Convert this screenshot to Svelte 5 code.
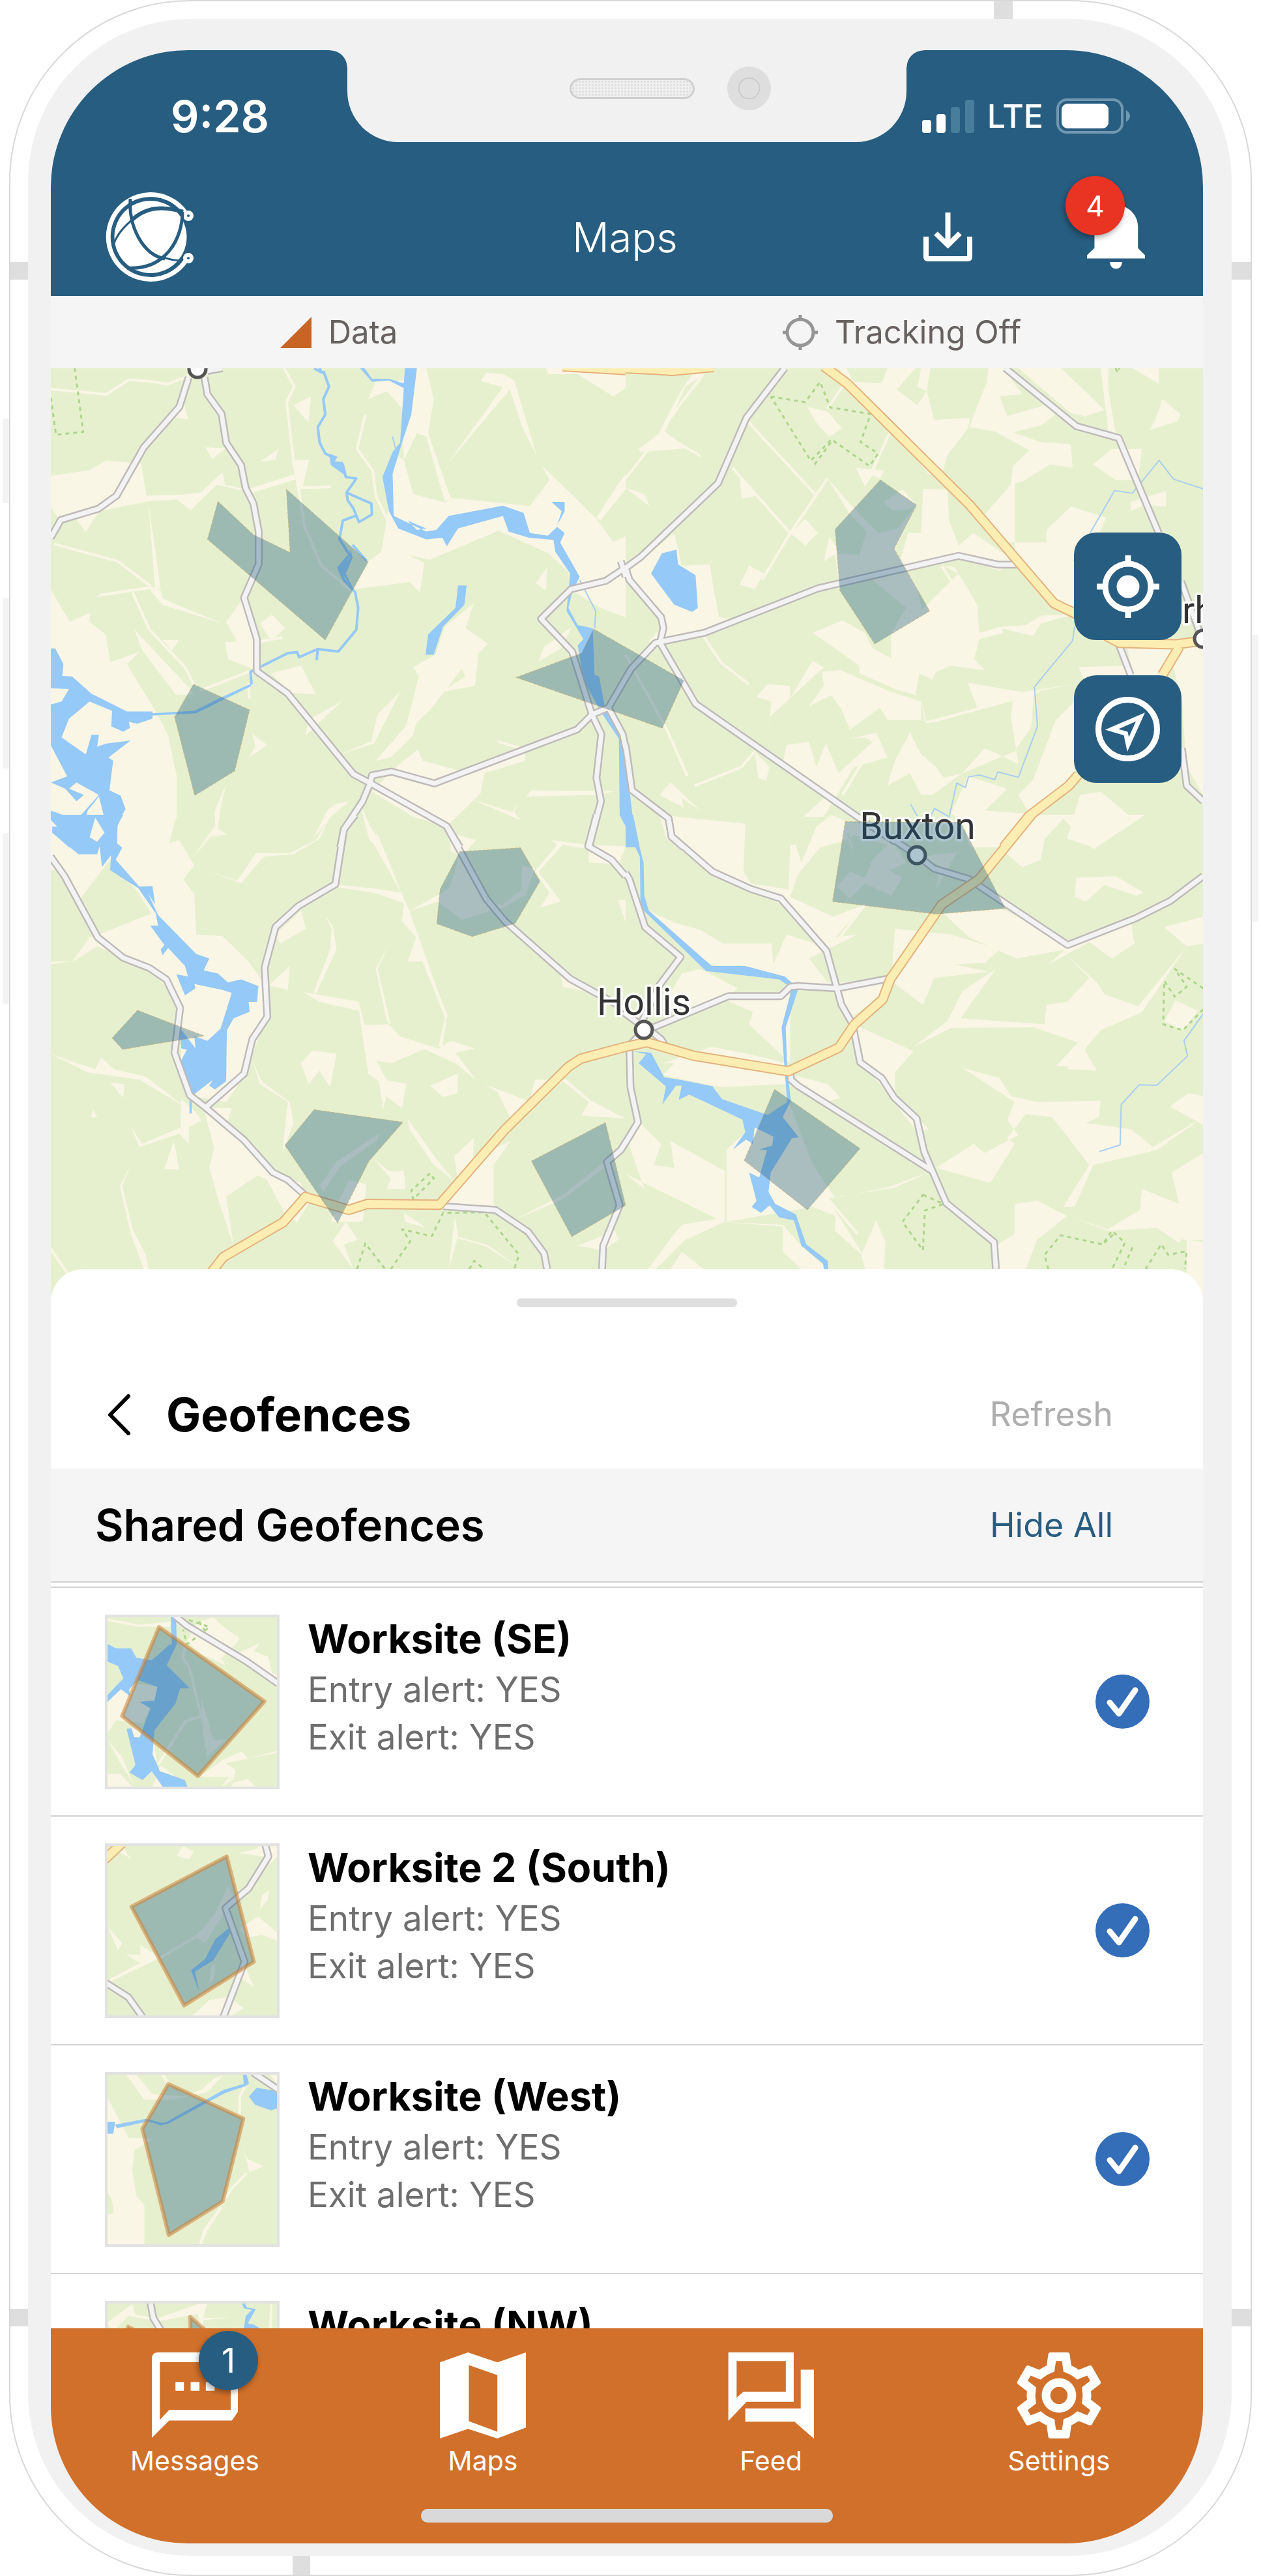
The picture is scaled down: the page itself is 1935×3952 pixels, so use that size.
<script>
  // The map is surveyed in four tiles; each tile has its own local units.
  const tiles = {
    nw: 'translate(60 550) scale(.574 .4783)',
    ne: 'translate(960 550) scale(.574 .4783)',
    sw: 'translate(60 1250) scale(.574 .4592)',
    se: 'translate(960 1250) scale(.574 .4592)'
  };

  const clearings = {
    nw: `M31,377 L135,358 180,327 273,337 287,440 380,437 432,430 490,365 497,405 545,417 562,418 680,372 685,388 570,430 475,405 405,487 368,452 292,458 160,490 125,558 90,500 50,510 31,475Z
      M31,740 L82,845 137,815 135,845 178,885 190,975 270,940 235,980 320,1150 345,1210 368,1340 368,1460 345,1568 31,1568Z
      M500,845 L545,770 590,900 580,1000 505,965 497,910 530,908Z M590,850 L622,822 658,865 620,905Z M445,285 L500,288 462,322Z M592,330 L640,290 632,325Z
      M680,150 L727,122 720,205Z M682,325 L722,325 705,410 690,415Z M385,130 L398,195 365,190Z M330,903 L373,903 355,937Z
      M255,870 L400,1055 415,1080 365,1078 275,935Z M162,755 L298,730 325,745 330,770 490,850 330,790 295,740 155,765Z M292,458 L325,740 310,740Z
      M620,1010 L700,985 740,1078 670,1072Z M930,510 L985,630 1030,655 1018,750 990,717 840,740 880,650 915,620Z
      M975,325 L1000,435 1087,463 1100,447 1312,473 1365,390 1345,345 1420,430 1490,515 1535,588 1568,570 1568,830 1500,800 1420,740 1420,690 1362,625 1228,552 1045,645 985,630 930,515 945,300Z
      M1180,72 L1195,45 1240,50 1270,70 1330,310 1295,230 1258,100 1090,340 1240,92Z M1355,31 L1568,31 1568,95 1535,122 1440,50 1360,50Z
      M1012,31 L1035,31 1055,130 1040,240 1100,447 1085,460 1035,250 1010,240 975,325 970,160 930,105 880,130 900,75 970,70Z
      M1162,785 L1140,865 1200,915 1175,945 1165,1050 1075,1070 1140,1020 1130,995 1050,1120 1008,1170 1000,1210 940,1280 900,1290 980,1180 990,1140 1015,1020 1000,990 1060,950 1085,860Z
      M1358,670 L1355,745 1328,720Z M1425,860 L1395,930 1335,972 1350,925Z M570,1205 L610,1240 560,1280 578,1245Z M808,1100 L712,1210 720,1160Z
      M965,1070 L895,1235 808,1268 888,1228 905,1140Z M945,1320 L1012,1255 1025,1290 1150,1330 1300,1255 1300,1290 1190,1330 1180,1395 1090,1500 1000,1470 890,1390Z
      M1160,1415 L1265,1455 1280,1425 1270,1455 1288,1482Z M1315,1385 L1540,1388 1490,1400 1303,1405Z M790,1430 L830,1420 780,1470 740,1530 705,1568 735,1535 770,1450Z
      M855,1420 L885,1500 920,1568 885,1550Z M500,1365 L485,1440 478,1508 502,1528 460,1530 410,1600 470,1500 470,1450Z M1550,400 L1568,370 1568,420 1500,520 1490,510Z`,
    ne: `M190,31 L235,31 160,90 105,235 165,288 40,300 35,290 92,238 105,200 150,100Z
      M570,31 L590,31 610,75 685,80 700,31 775,31 725,100 780,150 805,105 825,197 920,190 915,225 860,310 845,375 810,372 725,240 600,90Z
      M790,31 L815,31 805,105 780,90Z M970,31 L1010,31 1060,115 1000,120 1020,185 1120,150 1160,170 1110,215 1035,237 1110,268 1190,275 1195,350 1135,340 1060,395 1040,400 1040,590 1000,590 960,500 1030,405 1035,345 1080,295 990,235 920,220 940,150 965,80Z
      M1050,31 L1165,31 1280,165 1230,185 1190,175Z M1270,31 L1290,31 1290,100 1310,240 1290,230Z M1355,31 L1425,31 1425,80Z M1435,130 L1485,180 1475,200 1400,230 1415,200Z
      M1190,475 L1285,510 1235,640 1200,720 1230,800 1150,790 1040,650 1040,590 1125,590 1125,550Z M1250,340 L1300,290 1380,290 1370,390 1310,390Z M1350,490 L1350,460 1445,425 1445,475 1390,470Z
      M795,418 L860,420 865,520 890,600 930,560 1040,650 1000,680 895,640 730,665 755,560 790,560Z M540,385 L610,480 675,560 725,548 778,470 720,610 780,740 800,850 650,700 570,715 560,625 625,630 645,555 600,500Z M615,350 L690,360 680,385 660,375 640,410Z
      M690,460 L740,420 778,470 755,485 710,485Z M285,350 L350,440 310,450 305,380Z M480,515 L515,560 480,600 440,560Z M0,415 L50,435 65,475Z
      M130,560 L150,665 225,660 235,740 250,830 300,840 60,910 100,860 90,800 0,700 0,670 50,640Z M305,725 L330,665 370,690 345,740Z M545,570 L570,620 530,650Z M485,155 L540,170 578,225 545,250 515,215Z
      M750,800 L780,820 890,690 850,665 880,670 940,790 945,880 1005,860 1070,855 1110,825 1200,820 1110,850 1090,890 1005,865 1010,880 945,900 932,965 960,1000 870,985 830,1005 820,1030 785,1010 775,1080 720,1060 625,1010 625,985 560,930 500,880 580,840 640,880 660,930 710,960 710,880Z
      M525,1005 L575,1000 700,1065 790,1100 790,1160 700,1160 680,1120 600,1190 575,1120 550,1080 490,1115 530,1050Z M380,1045 L440,1050 440,1090 500,970 530,990 385,1150 380,1210 390,1100 350,1085Z
      M915,1040 L1060,1070 1195,1045 1110,1065 1095,1080 1030,1100 830,1165 805,1170 790,1095 800,1165 940,1120Z M1035,1100 L1090,1080 1085,1180 1040,1260 900,1330 960,1250 1050,1300 1030,1150Z
      M430,1240 L490,1230 510,1310 535,1235 570,1330 660,1230 640,1215 600,1220 670,1200 700,1280 610,1310 530,1470 475,1470 530,1410 420,1300Z
      M760,1200 L790,1270 830,1310 850,1345 900,1330 820,1400 790,1400 760,1330 700,1370 720,1290Z M915,1340 L1020,1380 960,1450 1075,1460 1040,1520 1000,1568 920,1568 900,1480 870,1460Z
      M1150,1160 L1200,1100 1200,1370 1080,1460 1050,1400 1090,1350Z M1210,990 L1330,985 1350,1015 1230,1040Z M1340,925 L1470,930 1430,1020 1360,1020Z M1455,940 L1544,920 1544,1400 1500,1310 1487,1100Z
      M1215,1400 L1270,1390 1360,1480 1250,1568 1180,1540Z M345,1260 L385,1310 375,1355 355,1345Z M120,1360 L200,1450 150,1410 155,1440 90,1400Z`,
    sw: `M31,0 L370,0 340,97 375,85 415,170 385,215 415,265 420,400 490,405 560,490 600,560 600,700 550,870 500,960 415,940 380,820 375,640 300,510 155,440 88,492 135,410 170,395 300,330 265,260 190,150 110,280 60,185 31,185Z
      M88,488 L31,500 31,492Z M412,145 L465,70 502,70 460,74Z M580,128 L670,128 740,85 780,0 750,80 680,132 600,140 540,228 430,180 530,220Z
      M850,0 L885,80 905,65 975,280 990,320 1090,675 1078,775 1068,775 1085,678 1025,490 985,490 1008,410 970,355 975,295 900,262 800,242 800,234 900,247 968,260Z
      M705,592 L855,625 870,702 935,700 965,740 1068,782 1100,755 1165,780 1112,795 1170,888 1115,832 1030,783 942,830 902,822 930,888 982,898 970,980 928,940 920,985 908,890 880,865 855,655 750,625Z
      M990,322 L1070,265 1098,245 1125,125 1200,300 1240,300 1290,250 1290,170 1325,180 1300,270 1240,310 1130,350 1065,290Z M1370,85 L1465,100 1568,105 1550,165 1470,160 1470,115 1400,100 1335,190 1395,290 1340,310 1365,260 1325,190 1385,100Z
      M1045,905 L1120,865 1118,930 1080,943Z M700,830 L730,788 795,798 778,910 750,855 720,900Z M1190,900 L1305,955 1260,1015 1225,925Z M615,570 L670,505 665,585Z M632,400 L700,320 713,380 645,430Z
      M1100,60 L1168,85 1130,140 1100,120Z M765,340 L785,370 795,450 740,598 733,595 778,450 782,380Z M935,430 L905,515 940,700 930,690 900,515Z
      M440,980 L515,980 500,1040 545,1090 580,1110 620,1200 700,1230 720,1300 690,1360 660,1340 610,1220 585,1205 500,1275 520,1440 480,1290 455,1180 468,1115Z
      M380,950 L415,990 435,1020 400,1045 400,1100 375,1065 268,1110 245,1040 275,1100 378,1045Z M360,1090 L375,1185 335,1183Z M190,895 L228,900 225,945Z M165,812 L200,850 285,875 400,985 270,885 130,860 31,800 150,850Z M145,985 L155,1012 138,1010Z
      M245,1170 L222,1240 250,1385 285,1470 292,1518 280,1518 245,1400 216,1240Z M570,820 L595,890 670,960 680,1030 650,1130 665,960 590,900Z
      M750,1240 L795,1160 908,1065 905,1085 805,1175 760,1260Z M800,1290 L830,1220 875,1235 865,1360 780,1360Z M820,1360 L852,1420 815,1435 840,1518 785,1425Z
      M895,1150 L935,1190 975,1190 980,1250 930,1250 940,1215Z M985,1015 L1065,1155 1112,1225 1055,1170 990,1050Z M1110,1140 L1162,1080 1160,1150 1260,1090 1215,1170 1215,1310 1080,1300 1120,1225Z
      M1325,885 L1410,885 1475,955 1568,1015 1450,1005 1470,960 1400,890 1310,960Z M1275,1350 L1400,1270 1510,1160 1515,1175 1400,1285Z M1440,1440 L1540,1390 1548,1420 1510,1455Z M975,1330 L1035,1380 978,1360Z
      M1112,1340 L1120,1410 1200,1438 1290,1518 1195,1442 1118,1415 1095,1518Z M1395,540 L1430,545 1500,600 1400,575Z M1548,285 L1568,285 1568,360Z`,
    se: `M90,0 L320,30 315,190 335,230 440,250 435,275 440,100 455,100 470,160 510,40 550,0 620,40 600,80 520,110 460,200 440,275 555,340 640,300 560,410 620,400 490,480 540,560 690,555 690,600 600,680 540,450 420,300 220,190 110,80Z
      M60,320 L130,360 200,385 260,430 390,430 395,500 430,400 530,440 550,570 440,570 410,540 230,500 130,420Z M150,530 L200,515 300,580 280,600 400,610 440,600 440,830 330,700 340,660 270,620 170,650 100,640Z
      M720,380 L870,400 1000,450 960,495 880,500 970,525 825,545 795,635 710,555Z M850,330 L1010,315 1180,430 1350,350 1360,430 1300,480 1240,425 1130,500 1175,450 1045,480 990,450 920,410Z
      M565,240 L600,190 640,210 660,150 700,100 590,60 610,130 590,25 650,30 720,100 750,160 705,185 740,210 710,270 640,230 600,280Z M790,140 L885,125 830,250 840,170Z
      M940,200 L1000,100 1060,20 1100,0 1180,0 1120,80 1110,150 1060,175 1010,120Z M1205,210 L1310,205 1385,260 1365,270 1280,235 1230,290 1200,275Z M1440,375 L1544,340 1544,430 1500,440Z M1160,0 L1200,0 1250,60 1350,0 1390,0 1250,115Z
      M900,590 L990,515 895,680 1120,700 1125,635 1180,625 1240,545 1175,465 1260,560 1280,600 1370,640 1500,440 1380,660 1270,720 1190,840 1150,840 1210,760 1090,710 870,712 770,775 860,690Z
      M1220,770 L1260,855 1180,850Z M900,845 L1000,880 1030,940 1100,960 1270,955 1265,1010 1230,1030 1350,1050 1410,1110 1544,1010 1420,1120 1250,1170 1200,1310 1170,1310 1240,1170 1140,1010 1070,1000 1020,1080 1040,1100 975,1230 830,1180 930,1100 960,1130 1050,1070 1020,1020 1040,960Z
      M610,700 L770,790 720,860 720,930 810,1050 780,1060 680,900 630,830Z M450,870 L540,900 575,945 540,960 480,930Z M100,830 L230,775 330,800 430,830 430,900 250,910 100,870 130,830Z
      M440,970 L500,1170 560,1280 700,1245 820,1190 720,1245 540,1282 640,1480 560,1390 560,1340 500,1310 400,1200 500,1160 500,1310 270,1360 270,1120 320,1060Z
      M0,1070 L40,1030 95,1100 75,1170 130,1180 120,1090 265,1190 265,1360 160,1420 80,1518 60,1518 130,1400 150,1370 245,1350 0,1200 50,1250Z M250,1360 L420,1370 470,1440 540,1518 470,1518 420,1460 420,1375Z
      M1040,1300 L1100,1290 1180,1340 1100,1420 1070,1518 1000,1518 990,1440 1040,1400Z M1190,1345 L1290,1385 1375,1320 1380,1250 1480,1300 1530,1340 1480,1430 1420,1380 1290,1390Z
      M1455,975 L1505,930 1544,940 1544,1035Z M1460,1195 L1544,1130 1544,1420 1490,1420 1480,1300Z M1440,690 L1470,620 1530,655 1490,720Z M670,1355 L695,1430 690,1518 640,1518 630,1470Z M150,1460 L210,1518 120,1518Z M1500,1420 L1560,1430 1560,1640 1500,1560Z`
  };

  const water = {
    nw: `M978,31 L1010,31 995,180 970,270 945,370 948,505 1035,555 1062,550 1095,505 1240,472 1295,495 1312,560 1360,568 1385,540 1405,560 1393,590 1445,700 1425,750 1415,800 1440,855 1480,865 1485,1015 1497,1020 1512,1115 1568,1220 1568,1500 1552,1465 1550,1220 1500,1130 1455,1030 1440,920 1455,900 1410,810 1420,690 1380,620 1375,582 1310,575 1255,555 1240,505 1120,545 1090,602 1078,575 1035,580 960,545 935,490 918,380 945,300 965,270 975,95 935,70 890,75 858,31 870,31 890,65 935,65 975,80Z
      M1370,460 L1405,460 1405,490 1385,535 1397,490Z M985,520 L1035,545 1010,550Z M1120,728 L1143,728 1137,790 1080,860 1055,950 1033,950 1040,885 1113,800Z M775,305 L798,315 790,330 812,332 818,375 780,342Z
      M833,610 L838,640 820,690 845,750 800,672 830,640Z M490,1085 L568,1042 565,1052 420,1138 303,1145 303,1138 415,1130Z
      M31,930 L43,930 65,980 62,1018 88,1020 140,1075 235,1132 303,1132 303,1155 262,1172 240,1165 243,1185 225,1197 193,1180 195,1130 135,1100 80,1155 60,1215 125,1270 140,1207 160,1207 155,1245 180,1235 245,1225 185,1280 198,1290 188,1385 218,1402 231,1445 210,1490 208,1568 185,1568 180,1500 160,1405 130,1450 108,1568 80,1568 35,1520 55,1510 31,1480 31,1450 100,1480 160,1400 100,1360 80,1380 120,1400 100,1420 70,1380 31,1360 75,1340 31,1240 31,1110 60,1100 80,1060 31,1058Z`,
    ne: `M97,625 L136,613 140,660 187,695 193,800 178,813 130,790 68,690Z M0,1220 L12,1400 20,1480 36,1568 0,1568Z`,
    sw: `M31,0 L225,0 208,40 208,95 222,110 205,150 268,240 303,238 310,300 290,260 318,335 420,465 455,480 440,520 478,530 505,560 540,550 586,572 583,625 560,625 563,658 520,680 502,720 500,890 470,918 455,905 465,885 410,938 378,825 395,785 380,780 375,710 418,780 415,740 450,755 485,715 515,595 490,585 415,565 418,580 390,603 367,533 398,540 390,505 345,445 330,470 325,450 335,435 297,370 318,370 312,330 265,245 190,185 192,135 168,175 162,105 155,132 105,132 35,60 35,40 50,40Z
      M100,42 L110,62 100,87 92,65Z M150,10 L175,60 155,90 135,75Z M402,950 L408,960 408,998 402,998Z`,
    se: `M0,0 L20,0 38,110 48,160 50,270 62,320 230,505 320,505 425,540 462,580 428,710 432,850 442,955 420,1010 463,1078 445,1080 388,1195 382,1260 400,1300 455,1335 483,1435 540,1490 542,1518 530,1518 528,1500 470,1440 450,1355 410,1345 385,1305 362,1330 337,1310 350,1290 330,1195 357,1212 378,1120 358,1118 392,1105 395,1075 345,1045 340,1100 322,1085 287,1118 320,1060 312,1018 170,935 142,952 150,905 135,905 98,968 108,908 35,830 55,800 20,790 68,795 103,877 145,885 232,907 258,950 380,1003 432,960 425,850 417,710 440,600 440,575 410,550 215,522 40,310 38,140 0,40Z`
  };

  const streams = {
    nw: `M735,31 L755,45 750,31 M760,40 L775,90 760,130 765,180 745,220 750,270 765,305 790,320 785,335 812,340 820,380 848,385 822,430 840,440 888,465 890,500 855,525 840,480 825,455 822,430 M845,505 L812,520 803,580 830,630 800,672 815,710 845,750 853,800 848,870 800,940 745,932 742,968 M745,932 L695,958 690,942 665,945 565,1005 568,1045 M838,598 L875,648`
  };

  const creeks = {
    nw: `M1445,710 L1488,810 1485,865 M945,250 L955,300`,
    ne: `M1544,418 L1465,387 1426,327 1355,432 1307,424 1198,650 M1200,860 L1195,905 1093,1053 1101,1180 1050,1343 995,1326 987,1351 947,1336 917,1342 908,1376 885,1362 865,1470 825,1443 818,1465 M780,1468 L762,1430`,
    se: `M1544,665 L1493,755 1502,806 1420,904 1373,902 1325,968 1322,1103 1267,1125`
  };

  const lanes = {
    nw: `M31,98 L180,115 240,68 295,73 345,82 400,55 M655,31 L682,90 662,140 680,330 697,440 710,540 755,665 835,745 M697,415 L780,412 M872,180 L850,290 892,360 900,440 930,515 M40,595 L210,650 298,730 M250,750 L295,870 390,990 413,1045 M430,1065 L565,1003 M560,1040 L562,1090 M1225,1228 L1300,1255 M590,908 L650,895`,
    ne: `M208,50 L150,140 92,238 M325,200 L510,440 M285,350 L440,560 540,385 M440,560 L365,710 M0,385 L95,238 200,313 M580,90 L540,160 M705,240 L660,360 M205,885 L255,975 330,1045 M0,950 L110,1190 165,1340 M185,1370 L310,1310 345,1260 M650,1260 L580,1400 M845,665 L890,750`,
    sw: `M31,1450 L75,1530 M1030,490 L1090,675`,
    se: `M640,300 L560,430 M540,1282 L620,1400`
  };

  const parks = {
    nw: `M95,31 L118,235 45,245 31,120`,
    ne: `M388,122 L480,140 520,75 547,157 655,178 628,268 675,305 652,345 553,262 505,340 M548,262 L495,328 388,122 M1310,31 L1315,45 1320,31`,
    sw: `M1045,1198 L995,1255 1000,1285 1055,1215Z M850,1518 L872,1432 925,1518 M940,1518 L992,1425 970,1385 1050,1408 1080,1330 1190,1328 1283,1470 1270,1518 M1150,1518 L1163,1490 1190,1518`,
    se: `M795,1270 L850,1300 800,1322 795,1455 740,1360Z M1130,1518 L1120,1470 1163,1405 1275,1435 1300,1390 1335,1430 1300,1518 M1280,1430 L1310,1395 M1355,1445 L1330,1518 M1390,1518 L1432,1435 1450,1470 1500,1458 1495,1518 M1544,580 L1468,515 1500,575 1468,608 1440,555 1437,700 1490,720 1544,650`
  };

  const roads = {
    nw: `M400,60 L375,155 280,285 207,440 158,482 58,518 31,575 M442,60 L450,115 488,178 500,270 540,342 552,415 573,465 587,555 587,660 548,767 582,900 582,1003 665,1075 840,1333 885,1362 1090,1500 1125,1568 M450,40 L490,31
      M1555,650 L1562,675 1515,713 1422,740 1342,835 1425,940 1478,1142 1503,1205 1490,1345 1502,1420 1470,1568 M1562,675 L1568,700 M1478,1142 L1438,1190 1057,1363 942,1325 890,1337 885,1362 865,1420 815,1510 805,1568 M1478,1142 L1522,1120 1568,1025 M1522,1120 L1560,1205 1568,1250`,
    ne: `M425,31 L323,190 247,400 40,637 0,672 10,710 95,830 101,865 92,912 187,1108 620,1470 720,1550 M0,1025 L15,995 80,912 210,880 515,737 890,633 995,661 1045,661 M0,1240 L17,1385 115,1475 123,1535 155,1568
      M1015,31 L1205,217 1318,255 1425,560 M1485,715 L1535,880 M1318,915 L1350,1015 M1487,1250 L1500,1370 1544,1420`,
    sw: `M31,140 L68,205 157,410 225,478 295,512 340,550 377,645 362,795 403,937 445,978 548,1087 625,1195 665,1220 712,1272 M445,978 L548,865 570,750 610,675 603,510 632,375 693,305 792,232 815,48 845,0
      M1090,40 L1195,280 1245,355 1420,548 1568,650 M1490,0 L1468,105 1530,150 1568,205 M1080,1308 L1220,1320 1307,1393 1350,1465 1358,1518 M1570,1090 L1555,1120 1518,1160 1552,1305 1508,1440 1505,1518`,
    se: `M115,15 L123,72 232,190 335,248 415,280 537,455 565,580 577,635 607,700 627,827 685,880 718,945 778,1015 798,1125 820,1190 857,1297 985,1428 990,1518 M0,195 L10,215 52,375 147,475 90,570 40,700 M-5,660 L49,710 75,730 95,750 105,770 M75,710 L275,606 415,606 440,575 460,572 565,580 700,548
      M49,720 L10,770 13,910 33,1027 0,1095 M440,860 L442,885 460,905 820,1190 M700,70 L779,135 825,180 918,215 1182,435 1365,345 1457,287 1544,205`
  };

  const highways = {
    nw: `M1400,25 L1568,37`,
    ne: `M0,32 L80,36 125,40 235,27 M530,25 L592,80 920,470 1145,785 1205,820 M1285,890 L1320,912 1470,917 1544,905 M1480,925 L1435,1015 M1210,1335 L1185,1370 1078,1468 1010,1568`,
    sw: `M460,1530 L492,1478 652,1362 712,1277 828,1320 878,1300 1070,1303 1245,1052 1415,842 1448,815 1568,775`,
    se: `M0,775 L57,760 182,805 435,857 570,778 612,700 687,617 708,548 845,300 945,215 1085,0`
  };

  const fences = {
    nw: `M478,458 L573,565 671,622 661,419 880,652 765,903 450,580Z M413,1045 L563,1127 523,1323 416,1402 362,1150Z M1275,1023 L1450,945 1482,867 1724,1033 1666,1186Z`,
    ne: `M681,389 L778,470 718,610 813,810 666,916 573,745 560,548Z`,
    sw: `M1125,123 L1287,110 1339,222 1273,363 1158,407 1063,364 1072,248Z M263,653 L442,739 223,784 195,746Z M735,985 L973,1027 882,1157 798,1364 657,1104Z M1514,1028 L1568,1305 1424,1410 1316,1157Z`,
    se: `M587,23 L895,25 1015,313 830,332 553,290Z M398,917 L627,1115 486,1320 317,1155Z`
  };

  const layers = [
    ['clearing', clearings],
    ['lane', lanes],
    ['water', water],
    ['stream', streams],
    ['creek', creeks],
    ['park', parks],
    ['road-case', roads],
    ['road', roads],
    ['highway-case', highways],
    ['highway', highways]
  ];

  let geofences = $state([
    {
      name: 'Worksite (SE)', shown: true, box: '39 95 418 600',
      clearing: `M39,100 L120,122 200,110 190,130 110,128 39,108Z M260,115 L300,95 330,135 365,170 350,200 320,240 330,265 270,225 235,180Z M365,220 L415,185 400,215 435,235 445,290 457,300 457,320 390,260Z M39,370 L75,345 95,360 130,470 60,460 39,505Z M100,330 L165,340 155,390 125,470 75,440Z M270,380 L300,530 330,530 285,590 275,500Z M325,600 L370,570 385,595 457,568 457,575 330,612 355,635 350,670 320,695 340,660 265,660Z M39,650 L70,650 100,695 39,695Z M39,530 L75,590 100,680 70,610Z M350,680 L385,668 405,695 345,695Z M90,495 L110,480 125,520 150,500 160,600 130,640Z M170,620 L190,640 235,695 150,695Z`,
      line: `M230,200 L225,240 240,270 270,445 230,465 165,615 M270,445 L290,520`,
      water: `M195,95 L208,95 210,190 185,265 242,347 218,347 207,400 155,495 150,580 168,640 230,672 236,695 175,695 148,640 125,672 93,645 108,618 86,490 98,488 105,520 118,520 145,418 118,395 155,390 162,342 115,318 92,350 95,375 72,350 39,395 39,370 78,312 65,268 39,252 39,190 60,205 97,205 110,238 148,248 190,195 198,190Z`,
      road: `M205,90 L235,125 380,250 460,330`, highway: '', park: `M240,105 L290,130 260,165 235,190 225,140 M265,110 L280,145`,
      fence: `M166,130 L426,393 262,658 75,445Z`
    },
    {
      name: 'Worksite 2 (South)', shown: true, box: '39 905 418 600',
      clearing: `M75,905 L97,950 65,925Z M225,905 L252,925 240,952 210,940Z M360,930 L410,915 410,905 457,905 457,940 440,970 430,945 390,935Z M438,1060 L435,1095 415,1130 420,1080Z M120,1255 L170,1300 39,1390 39,1380 120,1320 85,1290 120,1290Z M39,1190 L75,1250 65,1275Z M365,1200 L410,1155 457,1210 457,1240 420,1220 380,1230Z M250,1505 L290,1450 340,1440 375,1480 345,1505Z M375,1320 L400,1405 375,1380 360,1360Z M335,1050 L350,1085 310,1180 280,1250 255,1225 300,1160Z M295,1330 L305,1320 300,1380 290,1390Z`,
      line: `M170,1300 L270,1215 325,1110`,
      water: `M343,1190 L345,1205 300,1310 255,1350 265,1420 245,1345 280,1305 305,1235Z`,
      road: `M428,900 L436,942 387,1055 330,1125 377,1315 325,1510 M35,1390 L90,1440 125,1510`, highway: `M30,955 L75,895`, park: '',
      fence: `M333,942 L400,1315 228,1470 98,1120Z`
    },
    {
      name: 'Worksite (West)', shown: true, box: '39 250 418 782',
      clearing: `M85,250 L110,250 150,340 225,350 270,320 300,270 325,250 315,270 285,330 200,365 130,365Z M39,355 L90,540 150,545 105,600 100,690 110,810 130,850 130,1032 39,1032 39,895 55,890 50,830 39,790Z M372,590 L385,640 425,672 388,700 385,660Z M265,1032 L275,965 318,855 322,865 285,970 272,1032Z M440,250 L457,290 457,250Z`,
      line: `M382,290 L365,350 365,440 M175,250 L195,310 M382,705 L345,775 320,850`,
      water: `M373,250 L382,250 388,290 380,302 328,335 190,475 170,484 140,465 62,497 58,480 135,453 172,472 185,467 325,320 375,292Z M39,467 L58,467 53,522 39,522Z M407,310 L457,325 457,405 443,415 403,388 388,350Z`,
      road: `M398,240 L465,325`, highway: '', park: '',
      fence: `M189,293 L374,452 323,835 190,990 125,500Z`
    },
    {
      name: 'Worksite (NW)', shown: true, box: '39 1303 418 782',
      clearing: `M39,1390 L100,1305 108,1355 165,1370 265,1303 285,1303 275,1370 340,1368 275,1380 272,1450 262,1350 165,1385 90,1360 50,1440Z M440,1303 L445,1303 445,1440 437,1440Z`,
      line: '',
      water: `M371,1303 L378,1303 383,1322 405,1328 385,1395 400,1400 418,1420 375,1420 380,1360 395,1332 375,1325Z`,
      road: `M145,1300 L152,1370 175,1440`, highway: '', park: '',
      fence: `M243,1365 L400,1620 320,1900 60,1560 90,1410 200,1520 245,1520Z`
    }
  ]);

  const tabs = ['Messages', 'Maps', 'Feed', 'Settings'];
</script>

<main class="phone">
  <span class="key key-mute"></span>
  <span class="key key-up"></span>
  <span class="key key-down"></span>
  <span class="key key-power"></span>
  <span class="band band-top"></span>
  <span class="band band-bottom"></span>
  <span class="band side left high"></span>
  <span class="band side right high"></span>
  <span class="band side left low"></span>
  <span class="band side right low"></span>

  <div class="bezel">
    <div class="screen">
      <header class="top">
        <div class="status">
          <time class="clock">9:28</time>
          <div class="notch">
            <span class="speaker"></span>
            <span class="camera"></span>
          </div>
          <div class="signals">
            <svg class="bars" viewBox="0 0 80 51" aria-hidden="true">
              <rect x="0" y="31" width="14" height="20" rx="4" fill="#fff" />
              <rect x="22" y="22" width="14" height="29" rx="4" fill="#fff" />
              <rect x="44" y="11" width="14" height="40" rx="4" fill="#487d9b" />
              <rect x="66" y="0" width="14" height="51" rx="4" fill="#487d9b" />
            </svg>
            <span class="carrier">LTE</span>
            <svg class="battery" viewBox="0 0 114 54" aria-hidden="true">
              <rect x="2" y="2" width="99" height="50" rx="14" fill="none" stroke="#7198b0" stroke-width="4" />
              <rect x="8" y="8" width="72" height="38" rx="9" fill="#fff" />
              <path d="M107 18 Q113 22 113 27 Q113 32 107 36Z" fill="#7198b0" />
            </svg>
          </div>
        </div>

        <div class="appbar">
          <svg class="logo" viewBox="0 0 137 137" aria-label="Logo" role="img">
            <path d="M124 32 A65 65 0 1 0 124 105" fill="none" stroke="#fff" stroke-width="7" />
            <circle cx="128" cy="36" r="5" fill="none" stroke="#fff" stroke-width="6" />
            <circle cx="128" cy="101" r="5" fill="none" stroke="#fff" stroke-width="6" />
            <circle cx="70" cy="68.500" r="55.500" fill="#fff" />
            <g fill="none" stroke="#275d80">
              <path d="M39 10 C36 52 58 96 92 102" stroke-width="5" />
              <path d="M88 99 Q100 104 116 105" stroke-width="3" />
              <path d="M12 84 Q18 62 41 43" stroke-width="3" />
              <path d="M40 44 C64 20 92 22 120 30" stroke-width="6" />
              <path d="M119 30 C119 70 94 120 34 116" stroke-width="5" />
            </g>
          </svg>
          <h1>Maps</h1>
          <div class="actions">
            <button class="plain" aria-label="Download">
              <svg class="download" viewBox="0 0 75 75" fill="none" stroke="#fff" stroke-width="8">
                <path d="M37.500 0 V48 M19 32 L37.500 50 L56 32" />
                <path d="M4 37 V68 Q4 71 7 71 H68 Q71 71 71 68 V37" />
              </svg>
            </button>
            <button class="plain bell" aria-label="Notifications, 4 new">
              <svg viewBox="1149 860 140 268" preserveAspectRatio="none" fill="#fff">
                <path d="M1149,1083 V1070 L1167,1040 V950 C1170,895 1195,862 1219,862 C1250,862 1272,905 1272,950 V1040 L1289,1070 V1083Z" />
                <path d="M1204,1098 H1234 Q1232,1126 1219,1126 Q1206,1126 1204,1098Z" />
              </svg>
              <span class="badge red">4</span>
            </button>
          </div>
        </div>
      </header>

      <div class="modes">
        <button class="plain mode">
          <svg class="wedge" viewBox="0 0 48 48"><path d="M48 0 V48 H0Z" fill="#c96524" /></svg>
          Data
        </button>
        <button class="plain mode tracking">
          <svg class="target" viewBox="0 0 54 54" fill="none" stroke="#959595" stroke-width="5">
            <circle cx="27" cy="27" r="20" />
            <path d="M27 0 V8 M27 46 V54 M0 27 H8 M46 27 H54" />
          </svg>
          Tracking Off
        </button>
      </div>

      <section class="map" aria-label="Map">
        <svg class="canvas" viewBox="78 565 1768 1442" preserveAspectRatio="xMidYMin slice">
          <rect x="0" y="500" width="1935" height="1600" fill="#e6f0cf" />
          {#each layers as [kind, shapes]}
            {#each Object.entries(shapes) as [tile, d]}
              <path class={kind} transform={tiles[tile]} {d} />
            {/each}
          {/each}
          <g class="town">
            <circle cx="303" cy="566" r="13" />
            <circle cx="988" cy="1580" r="13" />
            <circle cx="1407" cy="1312" r="13" />
            <circle cx="1846" cy="980" r="13" />
            <text x="988" y="1557" text-anchor="middle">Hollis</text>
            <text x="1408" y="1287" text-anchor="middle">Buxton</text>
            <text x="1814" y="956">rh</text>
          </g>
          {#each Object.entries(fences) as [tile, d]}
            <path class="fence" transform={tiles[tile]} {d} />
          {/each}
        </svg>
        <div class="map-tools">
          <button aria-label="My location">
            <svg class="locate" viewBox="0 0 96 96" fill="none" stroke="#fff" stroke-width="9">
              <circle cx="48" cy="48" r="35" />
              <circle cx="48" cy="48" r="17.500" fill="#fff" stroke="none" />
              <path d="M48 0 V13 M48 83 V96 M0 48 H13 M83 48 H96" />
            </svg>
          </button>
          <button aria-label="Navigate">
            <svg class="compass" viewBox="0 0 99 99" fill="none" stroke="#fff">
              <circle cx="49.500" cy="49.500" r="45" stroke-width="9" />
              <path d="M69 31 L50 73 L46.500 56.500 L25 50Z" stroke-width="7" />
            </svg>
          </button>
        </div>
      </section>

      <section class="sheet">
        <div class="grip"></div>
        <div class="sheet-head">
          <button class="plain back" aria-label="Back">
            <svg viewBox="0 0 36 63" fill="none" stroke="#000" stroke-width="6" stroke-linecap="round" stroke-linejoin="round"><path d="M32 3 L4 31.500 L32 60" /></svg>
          </button>
          <h2>Geofences</h2>
          <button class="plain link muted">Refresh</button>
        </div>
        <div class="group-head">
          <h3>Shared Geofences</h3>
          <button class="plain link">Hide All</button>
        </div>
        <ul class="list">
          {#each geofences as g, i}
            <li>
              <svg class="thumb" viewBox={g.box} preserveAspectRatio="none" aria-hidden="true">
                <path class="clearing" d={g.clearing} />
                <path class="lane" d={g.line} />
                <path class="water" d={g.water} />
                <path class="park" d={g.park} />
                <path class="road-case" d={g.road} />
                <path class="road" d={g.road} />
                <path class="highway-case" d={g.highway} />
                <path class="highway" d={g.highway} />
                <path class="thumb-fence" d={g.fence} />
              </svg>
              <div class="info">
                <h4><label for="fence-{i}">{g.name}</label></h4>
                <p>Entry alert: YES</p>
                <p>Exit alert: YES</p>
              </div>
              <span class="check">
                <input id="fence-{i}" type="checkbox" bind:checked={g.shown} />
                <svg viewBox="0 0 83 83" fill="none" stroke="#fff" stroke-width="9" stroke-linecap="round" stroke-linejoin="round"><path d="M22 43 L36 60 L61 24" /></svg>
              </span>
            </li>
          {/each}
        </ul>
      </section>

      <footer class="dock">
        <nav>
          {#each tabs as tab}
            <a href="#{tab.toLowerCase()}">
              <span class="icon">
                {#if tab === 'Messages'}
                  <svg viewBox="371 327 204 395" preserveAspectRatio="none" fill="#fff" fill-rule="evenodd">
                    <path d="M385,327 H562 Q575,327 575,350 V600 L561,640 H412 L371,719 V350 Q373,327 385,327Z M390,372 V637 L412,591 H558 V372Z" />
                    <path d="M427,463 H447 V503 H427Z M463,463 H484 V503 H463Z M499,463 H520 V503 H499Z" />
                  </svg>
                  <span class="badge blue">1</span>
                {:else if tab === 'Maps'}
                  <svg viewBox="1059 327 208 395" preserveAspectRatio="none" fill="#fff" fill-rule="evenodd">
                    <path d="M1059,373 L1127,327 1198,373 1267,327 V672 L1198,722 1127,678 1059,722Z M1129,385 V643 L1198,691 V431Z" />
                  </svg>
                {:else if tab === 'Feed'}
                  <svg viewBox="286 327 208 395" preserveAspectRatio="none" fill="#fff" fill-rule="evenodd">
                    <path d="M287,327 H445 V554 H331 L287,641Z M307,367 V535 L323,508 H426 V367Z" />
                    <path d="M462,406 H494 V723 L447,645 H328 V584 H462Z" />
                  </svg>
                {:else}
                  <svg viewBox="2 2 20 20" fill="#fff">
                    <path d="M19.430 12.980c.04-.32.07-.64.07-.98 0-.34-.03-.66-.07-.98l2.110-1.650c.19-.15.24-.42.12-.64l-2-3.460c-.09-.16-.26-.25-.44-.25-.06 0-.12.01-.17.03l-2.490 1c-.52-.4-1.080-.73-1.690-.98l-.38-2.650C14.460 2.180 14.250 2 14 2h-4c-.25 0-.46.18-.49.42l-.38 2.650c-.61.25-1.170.59-1.690.98l-2.490-1c-.06-.02-.12-.03-.18-.03-.17 0-.34.09-.43.25l-2 3.460c-.13.22-.07.49.12.64l2.110 1.650c-.04.32-.07.65-.07.98 0 .33.03.66.07.98l-2.110 1.650c-.19.15-.24.42-.12.64l2 3.460c.09.16.26.25.44.25.06 0 .12-.01.17-.03l2.490-1c.52.4 1.080.73 1.690.98l.38 2.650c.03.24.24.42.49.42h4c.25 0 .46-.18.49-.42l.38-2.650c.61-.25 1.170-.59 1.690-.98l2.490 1c.06.02.12.03.18.03.17 0 .34-.09.43-.25l2-3.460c.12-.22.07-.49-.12-.64l-2.110-1.650zm-1.980-1.710c.04.31.05.52.05.73 0 .21-.02.43-.05.73l-.14 1.130.89.7 1.080.84-.7 1.210-1.270-.51-1.040-.42-.9.68c-.43.32-.84.56-1.250.73l-1.060.43-.16 1.130-.2 1.350h-1.400l-.19-1.350-.16-1.130-1.060-.43c-.43-.18-.83-.41-1.230-.71l-.91-.7-1.060.43-1.270.51-.7-1.210 1.080-.84.89-.7-.14-1.130c-.03-.31-.05-.54-.05-.74s.02-.43.05-.73l.14-1.130-.89-.7-1.080-.84.7-1.210 1.270.51 1.040.42.9-.68c.43-.32.84-.56 1.250-.73l1.060-.43.16-1.130.2-1.350h1.390l.19 1.350.16 1.130 1.060.43c.43.18.83.41 1.230.71l.91.7 1.060-.43 1.270-.51.7 1.210-1.070.85-.89.7.14 1.130zM12 8c-2.210 0-4 1.790-4 4s1.790 4 4 4 4-1.790 4-4-1.790-4-4-4zm0 6c-1.100 0-2-.9-2-2s.9-2 2-2 2 .9 2 2-.9 2-2 2z" />
                  </svg>
                {/if}
              </span>
              {tab}
            </a>
          {/each}
        </nav>
        <div class="home"></div>
      </footer>
    </div>
  </div>
</main>

<style>
  :global(body) {
    margin: 0;
    background: #fff;
    font-family: Inter, 'Liberation Sans', sans-serif;
  }
  :global(*) { box-sizing: border-box; }
  h1, h2, h3, h4, p, ul { margin: 0; padding: 0; }
  svg { display: block; }
  button { font: inherit; cursor: pointer; border: 0; }
  .plain { background: none; padding: 0; color: inherit; }

  .phone {
    position: relative;
    margin: 0 14px;
    padding: 27px 29px 29px 27px;
    border: 2px solid #d8d8d8;
    border-radius: 278px;
    background: #fff;
  }
  .bezel {
    padding: 48px 44px 19px 35px;
    border-radius: 250px;
    background: #f1f1f1;
  }
  .screen {
    overflow: hidden;
    border-radius: 210px;
    background: #fff;
  }

  .band { position: absolute; background: #dedede; }
  .band-top { top: 0; right: 365px; width: 29px; height: 27px; }
  .band-bottom { bottom: 0; left: 433px; width: 27px; height: 29px; }
  .side { width: 27px; height: 27px; }
  .left { left: 0; }
  .right { right: 0; width: 29px; }
  .high { top: 400px; }
  .low { bottom: 381px; }
  .key { position: absolute; left: -12px; width: 10px; border-radius: 4px 0 0 4px; background: #f3f3f3; }
  .key-mute { top: 640px; height: 130px; }
  .key-up { top: 915px; height: 262px; }
  .key-down { top: 1276px; height: 262px; }
  .key-power { top: 972px; left: auto; right: -12px; height: 440px; border-radius: 0 4px 4px 0; }

  .top { background: #275d80; color: #fff; }
  .status {
    display: grid;
    grid-template-columns: 1fr 858px 1fr;
    height: 138px;
  }
  .clock {
    padding: 61px 0 0 184px;
    font-size: 68px;
    font-weight: 600;
    line-height: 80px;
  }
  .notch {
    position: relative;
    display: flex;
    justify-content: flex-end;
    align-items: center;
    gap: 50px;
    padding: 0 208px 24px 0;
    border-radius: 0 0 78px 78px;
    background: #f1f1f1;
  }
  .notch::before,
  .notch::after {
    content: '';
    position: absolute;
    top: 0;
    width: 26px;
    height: 26px;
  }
  .notch::before { left: -26px; background: radial-gradient(circle at 0 100%, transparent 25px, #f1f1f1 26px); }
  .notch::after { right: -26px; background: radial-gradient(circle at 100% 100%, transparent 25px, #f1f1f1 26px); }
  .speaker {
    width: 192px;
    height: 32px;
    border: 3px solid #cfcfcf;
    border-radius: 16px;
    background: radial-gradient(circle, #dedede 1px, #efefef 2px) 0 0 / 5px 5px;
  }
  .camera {
    width: 67px;
    height: 67px;
    border-radius: 50%;
    background: radial-gradient(circle, #dedede 15px, #cbcbcb 15px, #cbcbcb 17px, #dedede 17px);
  }
  .signals {
    display: flex;
    align-items: center;
    justify-content: flex-end;
    gap: 20px;
    padding: 64px 111px 0 0;
    height: 138px;
  }
  .bars { width: 80px; height: 51px; }
  .carrier { font-size: 50px; font-weight: 500; line-height: 60px; }
  .battery { width: 114px; height: 54px; }

  .appbar {
    display: grid;
    grid-template-columns: 1fr auto 1fr;
    align-items: center;
    height: 239px;
    padding: 58px 89px 0 83px;
  }
  .logo { width: 137px; height: 137px; }
  h1 { font-size: 63px; font-weight: 300; line-height: 72px; }
  .actions { display: flex; justify-content: flex-end; align-items: center; gap: 176px; }
  .download { width: 75px; height: 75px; }
  .bell { position: relative; }
  .bell svg { width: 89px; height: 99px; }
  .badge {
    position: absolute;
    display: grid;
    place-items: center;
    width: 91px;
    height: 91px;
    border-radius: 50%;
    color: #fff;
    box-shadow: -2px 4px 8px rgba(0, 0, 0, .35);
  }
  .red { left: -33px; top: -44px; background: #e93323; font-size: 44px; }
  .blue { left: 72px; top: -33px; background: #275d80; font-size: 52px; }

  .modes {
    display: grid;
    grid-template-columns: 1fr 1fr;
    height: 111px;
    background: #f5f5f5;
    color: #67615f;
    font-size: 49px;
  }
  .mode { display: flex; align-items: center; justify-content: center; gap: 26px; }
  .tracking { padding-right: 40px; }
  .wedge { width: 48px; height: 48px; }
  .target { width: 54px; height: 54px; }

  .map { position: relative; }
  .canvas { width: 100%; height: 1442px; }
  .clearing { fill: #faf6e5; }
  .water { fill: #95c9f7; fill-rule: evenodd; }
  .lane, .stream, .creek, .park, .road-case, .road, .highway-case, .highway {
    fill: none;
    vector-effect: non-scaling-stroke;
    stroke-linejoin: round;
  }
  .lane { stroke: #faf6e5; stroke-width: 4; }
  .stream { stroke: #95c9f7; stroke-width: 4; }
  .creek { stroke: #a9ceee; stroke-width: 2; }
  .park { stroke: #add68b; stroke-width: 3; stroke-dasharray: 6 6; }
  .road-case { stroke: #bfbaba; stroke-width: 12; }
  .road { stroke: #f4f3f3; stroke-width: 7; }
  .highway-case { stroke: #e5b27c; stroke-width: 16; }
  .highway { stroke: #fceeb2; stroke-width: 12; }
  .fence {
    fill: rgba(19, 86, 122, .35);
    stroke: rgba(222, 170, 90, .7);
    stroke-width: 1;
    stroke-dasharray: 4 3;
    vector-effect: non-scaling-stroke;
  }
  .town circle { fill: #fff; stroke: #555; stroke-width: 5; }
  .town text {
    font-family: Roboto, 'Liberation Sans', sans-serif;
    font-size: 57px;
    fill: #333;
    stroke: #fff;
    stroke-width: 7;
    stroke-linejoin: round;
    paint-order: stroke;
  }
  .map-tools {
    position: absolute;
    top: 252px;
    right: 33px;
    display: grid;
    gap: 54px;
  }
  .map-tools button {
    display: grid;
    place-items: center;
    width: 165px;
    height: 165px;
    border-radius: 34px;
    background: #275d80;
  }
  .locate { width: 96px; height: 96px; }
  .compass { width: 99px; height: 99px; }

  .sheet {
    position: relative;
    margin-top: -60px;
    padding-top: 45px;
    border-radius: 50px 50px 0 0;
    background: #fff;
  }
  .grip { width: 338px; height: 13px; margin: 0 auto; border-radius: 6px; background: #dfdfdf; }
  .sheet-head {
    display: flex;
    align-items: center;
    height: 248px;
    padding: 82px 138px 0 87px;
  }
  .back { margin-right: 54px; }
  .back svg { width: 36px; height: 63px; }
  h2 { flex: 1; font-size: 71px; font-weight: 700; line-height: 84px; }
  .link { color: #275d80; font-size: 52px; line-height: 60px; }
  .muted { color: #aeaeae; }
  .group-head {
    display: flex;
    align-items: center;
    justify-content: space-between;
    height: 175px;
    padding: 0 138px 0 68px;
    border-bottom: 2px solid #d2d2d2;
    background: #f5f5f5;
  }
  h3 { font-size: 67px; font-weight: 600; line-height: 80px; }
  .list {
    height: 1138px;
    margin-top: 6px;
    overflow: hidden;
    border-top: 2px solid #d2d2d2;
    list-style: none;
  }
  .list li {
    display: flex;
    align-items: flex-start;
    height: 351px;
    padding: 0 82px 0 83px;
    border-bottom: 2px solid #d2d2d2;
  }
  .thumb {
    width: 268px;
    height: 268px;
    margin-top: 41px;
    border: 4px solid #e2e2e2;
    background: #e6f0cf;
  }
  .thumb-fence {
    fill: rgba(19, 86, 122, .35);
    stroke: rgba(205, 128, 50, .55);
    stroke-width: 6;
    stroke-linejoin: round;
    vector-effect: non-scaling-stroke;
  }
  .info { flex: 1; padding: 36px 0 0 43px; }
  h4 { font-size: 61px; font-weight: 700; line-height: 84px; color: #000; }
  p { font-size: 53px; line-height: 73px; color: #6e6e6e; }
  .check { display: grid; align-self: center; }
  .check input, .check svg { grid-area: 1 / 1; width: 83px; height: 83px; margin: 0; }
  .check input { appearance: none; border: 4px solid #346eb8; border-radius: 50%; }
  .check input:checked { background: #346eb8; }
  .check svg { pointer-events: none; }

  .dock {
    position: relative;
    padding: 37px 0 32px;
    background: #d1702b;
  }
  nav { display: grid; grid-template-columns: repeat(4, 1fr); }
  nav a {
    display: grid;
    justify-items: center;
    gap: 10px;
    color: #fff;
    font-size: 41px;
    line-height: 48px;
    text-decoration: none;
  }
  .icon { position: relative; }
  .icon svg { width: 132px; height: 132px; }
  .home { width: 632px; height: 21px; margin: 50px auto 0; border-radius: 10px; background: #d9d9d9; }
</style>
